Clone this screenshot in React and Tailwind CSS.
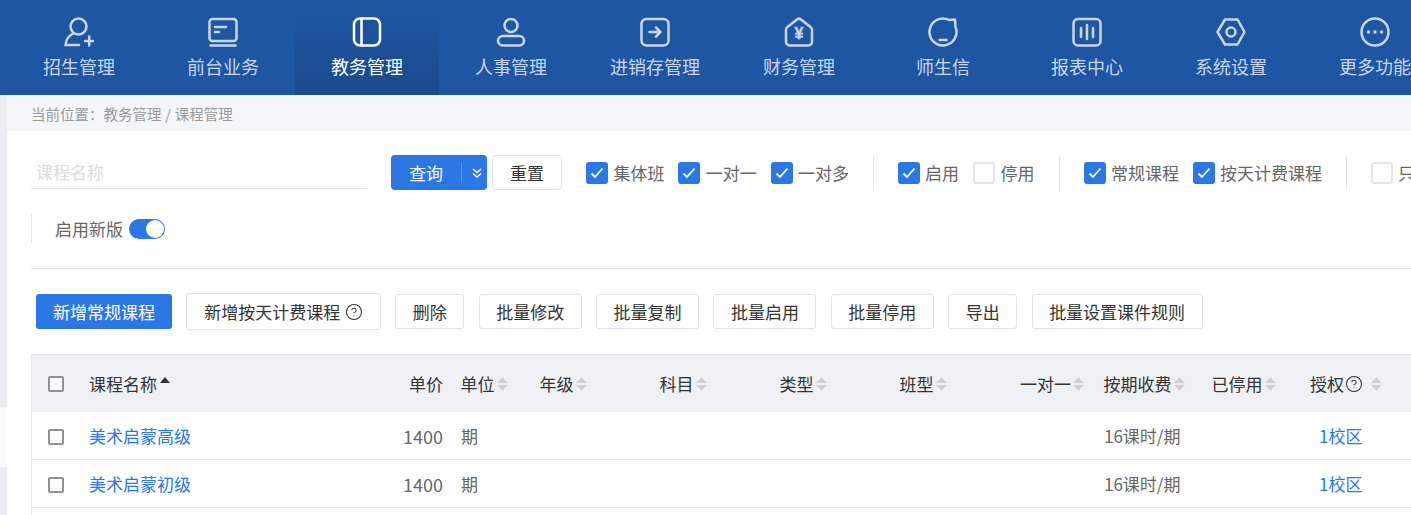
import React from 'react';
import { CircleHelp } from 'lucide-react';

const NAV = [
  { label: '招生管理', icon: <><circle cx="14.500" cy="9.500" r="8" /><path d="M9 16.500C4.500 19 2 23 1.500 28H15" /><path d="M21 24h8.500M25.200 19.500v9" /></> },
  { label: '前台业务', icon: <><rect x="1.500" y="2" width="27" height="22" rx="3" /><path d="M7 10h11M7 15h4" /><path d="M2.500 28.500h25" /></> },
  { label: '教务管理', active: true, icon: <><rect x="2" y="1.500" width="26" height="27" rx="6" /><path d="M9.500 2v26" /></> },
  { label: '人事管理', icon: <><circle cx="15" cy="8.500" r="6.500" /><rect x="2" y="19" width="26" height="9.500" rx="4.700" /></> },
  { label: '进销存管理', icon: <><rect x="1.500" y="2" width="27" height="26.500" rx="5" /><path d="M9.500 15h10.500M16 10.500l4.500 4.500-4.500 4.500" /></> },
  { label: '财务管理', icon: <><path d="M13 2.500a3 3 0 0 1 4 0l9.500 7.500a3 3 0 0 1 1.500 2.500V25a3.500 3.500 0 0 1-3.500 3.500h-19A3.500 3.500 0 0 1 2 25V12.500A3 3 0 0 1 3.500 10z" /><text x="15" y="22" textAnchor="middle" fontSize="16" fontWeight="700" fill="currentColor" stroke="currentColor" strokeWidth="0.400" fontFamily="'Liberation Sans', sans-serif">¥</text></> },
  { label: '师生信', icon: <><path d="M21 2.900L27 2.500l.5 7.400A13.500 13.500 0 1 1 21 2.900z" strokeLinejoin="round" /><path d="M11.500 23h7" /></> },
  { label: '报表中心', icon: <><rect x="1.500" y="2" width="27" height="26.500" rx="4.500" /><path d="M9 11v9M15 8v14M21 11v9" /></> },
  { label: '系统设置', icon: <><path d="M9 2.500h12.500L28.500 15l-7 12.500H9L1.500 15z" strokeLinejoin="round" /><circle cx="15" cy="15" r="4.500" /></> },
  { label: '更多功能', icon: <><circle cx="15" cy="15" r="13.500" /><circle cx="8.500" cy="15" r="1.700" fill="currentColor" stroke="none" /><circle cx="15" cy="15" r="1.700" fill="currentColor" stroke="none" /><circle cx="21.500" cy="15" r="1.700" fill="currentColor" stroke="none" /></> },
];

const ACTIONS = ['删除', '批量修改', '批量复制', '批量启用', '批量停用', '导出', '批量设置课件规则'];

const GRID = 'grid grid-cols-[42px_316px_63px_79px_120px_120px_120px_120px_84px_108px_98px_120px] items-center';

const ROWS = ['美术启蒙高级', '美术启蒙初级'];

function Check({ checked, label }) {
  return (
    <label className="flex items-center gap-[5.500px] text-[#666] shrink-0">
      {checked ? (
        <span className="flex items-center justify-center w-[22px] h-[22px] rounded-[3px] bg-[#2b78e4]">
          <svg width="14" height="12" viewBox="0 0 14 12" fill="none" stroke="#fff" strokeWidth="1.800">
            <path d="M1.500 6.500l3.500 3.500 7.500-8.500" />
          </svg>
        </span>
      ) : (
        <span className="w-[22px] h-[22px] rounded-[3px] border-2 border-[#e4e6ef] bg-white" />
      )}
      <span>{label}</span>
    </label>
  );
}

function Sort() {
  return (
    <svg className="ml-[2px] shrink-0" width="11" height="14" viewBox="0 0 11 14" fill="#cfcfd3">
      <path d="M5.500 0.500l5.500 5.500H0z" />
      <path d="M5.500 13.500L0 8h11z" />
    </svg>
  );
}

function Head({ children, className = '' }) {
  return (
    <div className={'flex items-center pl-[7.500px] ' + className}>
      <span>{children}</span>
      <Sort />
    </div>
  );
}

function Box({ className = '' }) {
  return <span className={'block w-[16px] h-[16px] ml-[16px] rounded-[2px] border-2 border-[#8f8f9d] bg-white ' + className} />;
}

export default function App() {
  return (
    <div className="w-[1411px] h-[515px] overflow-hidden bg-white flex flex-col font-['Noto_Sans_CJK_SC',sans-serif] text-[17px] leading-[24px]">
      {/* top nav */}
      <nav className="h-[95px] shrink-0 flex pl-[7px] bg-[#1f56a3]">
        {NAV.map((n) => (
          <div
            key={n.label}
            className={
              'w-[144px] shrink-0 flex flex-col items-center pt-[17px] ' +
              (n.active ? 'text-white bg-gradient-to-b from-[#1f56a3] to-[#1b4a8d]' : 'text-[#c9d6ea]')
            }
          >
            <svg width="30" height="30" viewBox="0 0 30 30" fill="none" stroke="currentColor" strokeWidth="2.500" strokeLinecap="round">
              {n.icon}
            </svg>
            <span className="mt-[6px] text-[18px] leading-[26px] whitespace-nowrap">{n.label}</span>
          </div>
        ))}
      </nav>

      <div className="flex flex-1 min-h-0">
        {/* left gutter */}
        <div className="w-[7px] shrink-0 flex flex-col">
          <div className="h-[312px] bg-[#ecedf2]" />
          <div className="h-[60px] bg-[#fafafa]" />
          <div className="flex-1 bg-[#ecedf2]" />
        </div>

        <div className="flex-1 min-w-0">
          <div className="h-[36px] pl-[24px] pt-px flex items-center bg-[#f5f6fa] text-[14.500px] text-[#999] whitespace-pre">
            当前位置：教务管理 <span className="mx-[0.500px]">/</span> 课程管理
          </div>

          <div className="pl-[24px]">
            {/* filters */}
            <div className="mt-[24px] h-[35px] flex items-center whitespace-nowrap">
              <div className="w-[336px] h-[34px] mb-px shrink-0 pl-[5px] border-b border-[#e0e3ee] text-[#dcdcdc] leading-[33px]">课程名称</div>
              <button className="ml-[24px] w-[96px] h-[35px] shrink-0 flex items-center rounded-[4px] bg-[#2b78e4] text-white">
                <span className="w-[70px] text-center">查询</span>
                <span className="w-px h-[20px] bg-[#5c97ea]" />
                <svg className="ml-[10px]" width="10" height="12" viewBox="0 0 10 12" fill="none" stroke="#fff" strokeWidth="1.600">
                  <path d="M1 2l4 3.500L9 2M1 6.500l4 3.500 4-3.500" />
                </svg>
              </button>
              <button className="ml-[5px] w-[70px] h-[35px] shrink-0 rounded-[4px] border border-[#dfe1ea] text-[#333]">重置</button>
              <div className="ml-[24px] flex items-center gap-[13.750px]">
                <Check checked label="集体班" />
                <Check checked label="一对一" />
                <Check checked label="一对多" />
              </div>
              <span className="ml-[23.500px] mr-[24px] w-px h-[35px] shrink-0 bg-[#e4e6ef]" />
              <div className="flex items-center gap-[14px]">
                <Check checked label="启用" />
                <Check label="停用" />
              </div>
              <span className="ml-[24px] mr-[24px] w-px h-[35px] shrink-0 bg-[#e4e6ef]" />
              <div className="flex items-center gap-[13.500px]">
                <Check checked label="常规课程" />
                <Check checked label="按天计费课程" />
              </div>
              <span className="ml-[23.500px] mr-[24px] w-px h-[35px] shrink-0 bg-[#e4e6ef]" />
              <Check label="只显示" />
            </div>

            <div className="mt-[24px] h-[29px] flex items-center border-l border-[#e4e6ef] pl-[23px] text-[#666]">
              <span>启用新版</span>
              <span className="ml-[6px] w-[36px] h-[20px] rounded-full bg-[#2b78e4] flex items-center justify-end pr-px">
                <span className="w-[18px] h-[18px] rounded-full bg-white" />
              </span>
            </div>

            <div className="mt-[25px] h-px bg-[#e0e3ee]" />

            {/* actions */}
            <div className="mt-[25px] ml-[5px] h-[35px] flex items-center gap-[14.400px] whitespace-nowrap text-[#333]">
              <button className="h-[35px] px-[17px] rounded-[3px] bg-[#2b78e4] text-white shrink-0">新增常规课程</button>
              <button className="h-[37px] w-[194.500px] shrink-0 flex items-center justify-center gap-[5px] rounded-[3px] border border-[#e0e3ee]">
                <span>新增按天计费课程</span>
                <CircleHelp size={18} strokeWidth={1.400} />
              </button>
              {ACTIONS.map((a) => (
                <button key={a} className="h-[35px] px-[16.500px] rounded-[3px] border border-[#e0e3ee] shrink-0">{a}</button>
              ))}
            </div>

            {/* table */}
            <div className="mt-[25px] border-l border-[#e4e6ef] whitespace-nowrap">
              <div className={GRID + ' h-[58px] bg-[#f0f1f5] border-t border-[#e4e6ef] text-[#333]'}>
                <Box />
                <div className="flex items-center pl-[15px]">
                  <span>课程名称</span>
                  <svg className="ml-[3px] mb-[8px]" width="10" height="6" viewBox="0 0 10 6" fill="#333"><path d="M5 0l5 6H0z" /></svg>
                </div>
                <div className="text-right pr-[10px]">单价</div>
                <Head>单位</Head>
                <Head>年级</Head>
                <Head>科目</Head>
                <Head>类型</Head>
                <Head>班型</Head>
                <Head className="justify-end pr-[12px]">一对一</Head>
                <Head>按期收费</Head>
                <Head>已停用</Head>
                <div className="flex items-center pl-2">
                  <span>授权</span>
                  <CircleHelp className="ml-[1px]" size={18} strokeWidth={1.400} />
                  <span className="ml-[6px]"><Sort /></span>
                </div>
              </div>
              {ROWS.map((name) => (
                <div key={name} className={GRID + ' h-[48px] border-b border-[#e4e6ef] text-[#666]'}>
                  <Box className="translate-y-px" />
                  <div className="pl-[15px] text-[#2b78e4]">{name}</div>
                  <div className="text-right pr-[10px] text-[18px]">1400</div>
                  <div className="pl-2">期</div>
                  <div /><div /><div /><div /><div />
                  <div className="pl-2">16课时/期</div>
                  <div />
                  <div className="pl-[17px] text-[#2b78e4]">1校区</div>
                </div>
              ))}
              <div className="h-[48px]" />
            </div>
          </div>
        </div>
      </div>
    </div>
  );
}
